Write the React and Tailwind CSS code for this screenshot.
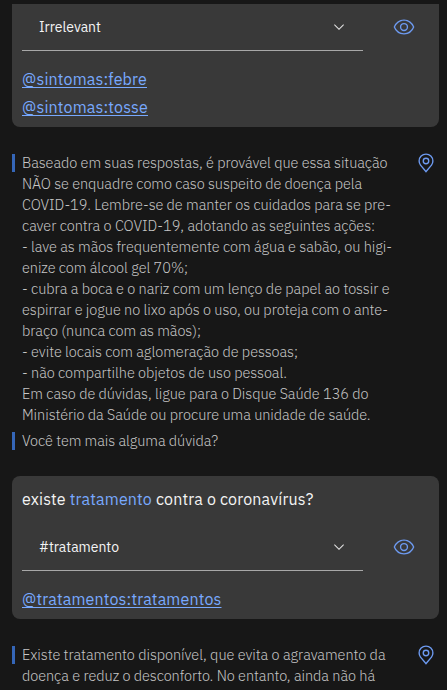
import { useLayoutEffect, useRef } from "react";

// A single line of text whose tracking is tuned so it spans `width` pixels.
function Line({ width, className = "", children }) {
  const ref = useRef(null);
  useLayoutEffect(() => {
    const el = ref.current;
    el.style.letterSpacing = "0px";
    const natural = el.getBoundingClientRect().width;
    el.style.letterSpacing = `${(width - natural) / el.textContent.length}px`;
  }, [width]);
  return (
    <div className="flex whitespace-pre">
      <span ref={ref} className={className}>{children}</span>
    </div>
  );
}

function EyeIcon() {
  return (
    <svg className="size-[22px] shrink-0 text-[#6d9af0]" viewBox="0 0 32 32" fill="currentColor">
      <path d="M30.94,15.66A16.69,16.69,0,0,0,16,5,16.69,16.69,0,0,0,1.06,15.66a1,1,0,0,0,0,.68A16.69,16.69,0,0,0,16,27,16.69,16.69,0,0,0,30.94,16.34,1,1,0,0,0,30.94,15.66ZM16,25c-5.3,0-10.9-3.93-12.93-9C5.1,10.93,10.7,7,16,7s10.9,3.93,12.93,9C26.9,21.07,21.3,25,16,25Z" />
      <path d="M16,10a6,6,0,1,0,6,6A6,6,0,0,0,16,10Zm0,10a4,4,0,1,1,4-4A4,4,0,0,1,16,20Z" />
    </svg>
  );
}

function PinIcon() {
  return (
    <svg className="-mt-px size-[22px] shrink-0 text-[#6d9af0]" viewBox="0 0 32 32" fill="currentColor">
      <path d="M16,18a5,5,0,1,1,5-5A5.0057,5.0057,0,0,1,16,18Zm0-8a3,3,0,1,0,3,3A3.0033,3.0033,0,0,0,16,10Z" />
      <path d="M16,30,7.5645,20.0513c-.0479-.0571-.3482-.4515-.3482-.4515A10.8888,10.8888,0,0,1,5,13a11,11,0,0,1,22,0,10.8844,10.8844,0,0,1-2.2148,6.5973l-.0015.0025s-.3.3944-.3447.4474ZM8.8125,18.395c.001.0007.2334.3082.2866.3744L16,26.9079l6.91-8.15c.0439-.0552.2783-.3649.2788-.3657A8.901,8.901,0,0,0,25,13,9,9,0,1,0,7,13a8.9054,8.9054,0,0,0,1.8125,5.395Z" />
    </svg>
  );
}

function Select({ label, width }) {
  return (
    <div className="flex">
      <div className="flex h-12 w-[341px] items-center justify-between border-b border-[#a8a8a8] pr-4 pl-[17px] text-sm text-[#f4f4f4]">
        <Line width={width}>{label}</Line>
        <svg className="size-4 text-[#e0e0e0]" viewBox="0 0 16 16" fill="currentColor">
          <path d="M8 11L3 6 3.7 5.3 8 9.6 12.3 5.3 13 6z" />
        </svg>
      </div>
      <div className="ml-[30px] flex h-12 items-center">
        <EyeIcon />
      </div>
    </div>
  );
}

function Entity({ width, children }) {
  return (
    <a className="block h-7 text-base leading-7 text-[#78a9ff]">
      <Line width={width} className="underline decoration-1 underline-offset-[2px]">{children}</Line>
    </a>
  );
}

function Message({ lines, pin }) {
  return (
    <div className="flex items-start justify-between pr-[2px]">
      <div className="flex">
        <div className="mt-px h-[18px] w-[3px] bg-[#3566b8]" />
        <div className="-mt-px mb-px ml-[7px] text-[14.5px] leading-[21px] font-light text-[#c6c6c6]">
          {lines.map(([text, width]) => (
            <Line key={text} width={width}>{text}</Line>
          ))}
        </div>
      </div>
      {pin && <PinIcon />}
    </div>
  );
}

const ADVICE = [
  ["Baseado em suas respostas, é provável que essa situação", 365.5],
  ["NÃO se enquadre como caso suspeito de doença pela", 340],
  ["COVID-19. Lembre-se de manter os cuidados para se pre-", 369],
  ["caver contra o COVID-19, adotando as seguintes ações:", 353],
  ["- lave as mãos frequentemente com água e sabão, ou higi-", 370],
  ["enize com álcool gel 70%;", 166],
  ["- cubra a boca e o nariz com um lenço de papel ao tossir e", 367.5],
  ["espirrar e jogue no lixo após o uso, ou proteja com o ante-", 366],
  ["braço (nunca com as mãos);", 179],
  ["- evite locais com aglomeração de pessoas;", 276],
  ["- não compartilhe objetos de uso pessoal.", 265],
  ["Em caso de dúvidas, ligue para o Disque Saúde 136 do", 346.5],
  ["Ministério da Saúde ou procure uma unidade de saúde.", 348.5],
];

const TREATMENT = [
  ["Existe tratamento disponível, que evita o agravamento da", 363.5],
  ["doença e reduz o desconforto. No entanto, ainda não há", 353],
];

export default function App() {
  return (
    <main className="h-[690px] w-[447px] overflow-hidden bg-[#171717] px-3 pt-1 font-['IBM_Plex_Sans',Roboto,'Liberation_Sans',sans-serif]">
      <div className="flex w-[427px] flex-col">
        <section className="h-[123px] rounded-b-lg bg-[#393939] px-[10px]">
          <div className="-mt-px">
            <Select label="Irrelevant" width={62} />
          </div>
          <div className="pt-[14px]">
            <Entity width={125}>@sintomas:febre</Entity>
            <Entity width={126}>@sintomas:tosse</Entity>
          </div>
        </section>

        <div className="mt-[26px] flex flex-col gap-[5px]">
          <Message lines={ADVICE} pin />
          <Message lines={[["Você tem mais alguma dúvida?", 196]]} />
        </div>

        <section className="mt-6 h-[143px] rounded-lg bg-[#393939] px-[10px]">
          <div className="h-[47px] pt-[11px] text-base leading-6 text-[#f4f4f4]">
            <Line width={291.5}>
              existe <span className="text-[#78a9ff]">tratamento</span> contra o coronavírus?
            </Line>
          </div>
          <Select label="#tratamento" width={80} />
          <div className="pt-[14px]">
            <Entity width={199.5}>@tratamentos:tratamentos</Entity>
          </div>
        </section>

        <div className="mt-[26px]">
          <Message lines={TREATMENT} pin />
        </div>
      </div>
    </main>
  );
}
